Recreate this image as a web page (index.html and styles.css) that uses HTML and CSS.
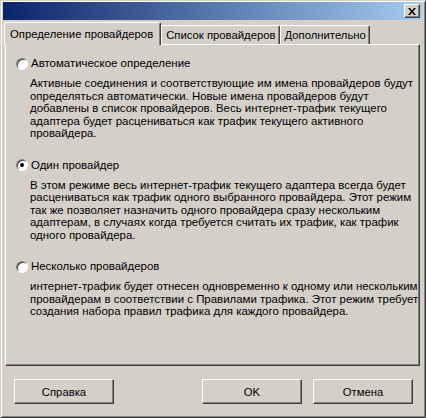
FILE: index.html
```html
<!DOCTYPE html>
<html lang="ru">
<head>
  <meta charset="UTF-8" />
  <title>Провайдеры</title>
  <link rel="stylesheet" href="styles.css">
</head>
<body>
  <div class="window">
    <!-- Заголовок окна -->
    <div class="titlebar">
      <span class="close-btn">
        <svg width="8" height="7" viewBox="0 0 8 7">
          <path d="M0 0h2l2 2.5L6 0h2L5 3.5 8 7H6L4 4.5 2 7H0l3-3.5z" fill="#000"/>
        </svg>
      </span>
    </div>

    <!-- Вкладки -->
    <div class="tabs">
      <div class="tab active">Определение провайдеров</div>
      <div class="tab">Список провайдеров</div>
      <div class="tab">Дополнительно</div>
    </div>

    <div class="panel">
      <div class="option">
        <div class="option-label"><span class="radio"></span>Автоматическое определение</div>
        <p class="option-text">Активные соединения и соответствующие им имена провайдеров будут<br>определяться автоматически. Новые имена провайдеров будут<br>добавлены в список провайдеров. Весь интернет-трафик текущего<br>адаптера будет расцениваться как трафик текущего активного<br>провайдера.</p>
      </div>
      <div class="option">
        <div class="option-label"><span class="radio checked"></span>Один провайдер</div>
        <p class="option-text">В этом режиме весь интернет-трафик текущего адаптера всегда будет<br>расцениваться как трафик одного выбранного провайдера. Этот режим<br>так же позволяет назначить одного провайдера сразу нескольким<br>адаптерам, в случаях когда требуется считать их трафик, как трафик<br>одного провайдера.</p>
      </div>
      <div class="option">
        <div class="option-label"><span class="radio"></span>Несколько провайдеров</div>
        <p class="option-text">интернет-трафик будет отнесен одновременно к одному или нескольким<br>провайдерам в соответствии с Правилами трафика. Этот режим требует<br>создания набора правил трафика для каждого провайдера.</p>
      </div>
    </div>

    <!-- Кнопки -->
    <div class="footer">
      <button class="btn">Справка</button>
      <div class="footer-right">
        <button class="btn">OK</button>
        <button class="btn">Отмена</button>
      </div>
    </div>
  </div>
</body>
</html>
```

FILE: styles.css
```css
body {
  margin: 0;
  font-family: "Liberation Sans", Arial, sans-serif;
  font-size: 11.3px;
  color: #000;
  background: #d4d0c8;
}
.window {
  width: 426px;
  height: 418px;
  box-sizing: border-box;
  background: #d4d0c8;
  border: 1px solid;
  border-color: #d4d0c8 #404040 #404040 #d4d0c8;
  box-shadow: inset 1px 1px #fff, inset -1px -1px #808080;
  padding: 1px 3px 0 2px;
  display: flex;
  flex-direction: column;
}
.titlebar {
  height: 18px;
  background: linear-gradient(to right, #0a246a, #a6caf0);
  display: flex;
  align-items: center;
  justify-content: flex-end;
  padding-right: 2px;
}
.close-btn {
  width: 16px;
  height: 14px;
  box-sizing: border-box;
  background: #d4d0c8;
  border: 1px solid;
  border-color: #fff #404040 #404040 #fff;
  box-shadow: inset -1px -1px #808080;
  display: flex;
  align-items: center;
  justify-content: center;
}
.tabs {
  display: flex;
  align-items: flex-end;
  height: 22px;
  margin-top: 2px;
  padding-left: 1px;
  position: relative;
  z-index: 1;
}
.tab {
  height: 19px;
  line-height: 18px;
  box-sizing: border-box;
  padding: 0 3px 0 4px;
  border: 1px solid;
  border-bottom: none;
  border-color: #fff #404040 transparent #fff;
  box-shadow: inset -1px 0 #808080;
  border-radius: 2px 2px 0 0;
  white-space: nowrap;
}
.tab.active {
  height: 23px;
  line-height: 22px;
  padding: 0 7px 0 5px;
  background: #d4d0c8;
  margin-bottom: -1px;
}
.panel {
  height: 322px;
  margin-left: 2px;
  margin-right: 2px;
  box-sizing: border-box;
  border: 1px solid;
  border-color: #fff #404040 #404040 #fff;
  box-shadow: inset -1px -1px #808080;
  padding: 12px 8px 0 10px;
  font-size: 11.45px;
}
.option {
  margin-bottom: 19px;
}
.option-label {
  display: flex;
  align-items: center;
  height: 13px;
  line-height: 13px;
}
.radio {
  width: 12px;
  height: 12px;
  box-sizing: border-box;
  border-radius: 50%;
  background: #fff;
  border: 1px solid;
  border-color: #808080 #fff #fff #808080;
  box-shadow: inset 1px 1px #404040;
  margin-right: 3px;
  display: flex;
  align-items: center;
  justify-content: center;
}
.radio.checked::after {
  content: "";
  width: 4px;
  height: 4px;
  border-radius: 50%;
  background: #000;
}
.option-text {
  margin: 7px 0 0 14px;
  line-height: 12.5px;
  white-space: nowrap;
}
.footer {
  display: flex;
  justify-content: space-between;
  padding: 13px 9px 0 11px;
}
.footer-right {
  display: flex;
  gap: 11px;
}
.btn {
  width: 100px;
  height: 25px;
  font-family: "Liberation Sans", Arial, sans-serif;
  font-size: 11.3px;
  color: #000;
  background: #d4d0c8;
  border: 1px solid;
  border-color: #fff #404040 #404040 #fff;
  box-shadow: inset -1px -1px #808080;
  padding: 0;
}
```
